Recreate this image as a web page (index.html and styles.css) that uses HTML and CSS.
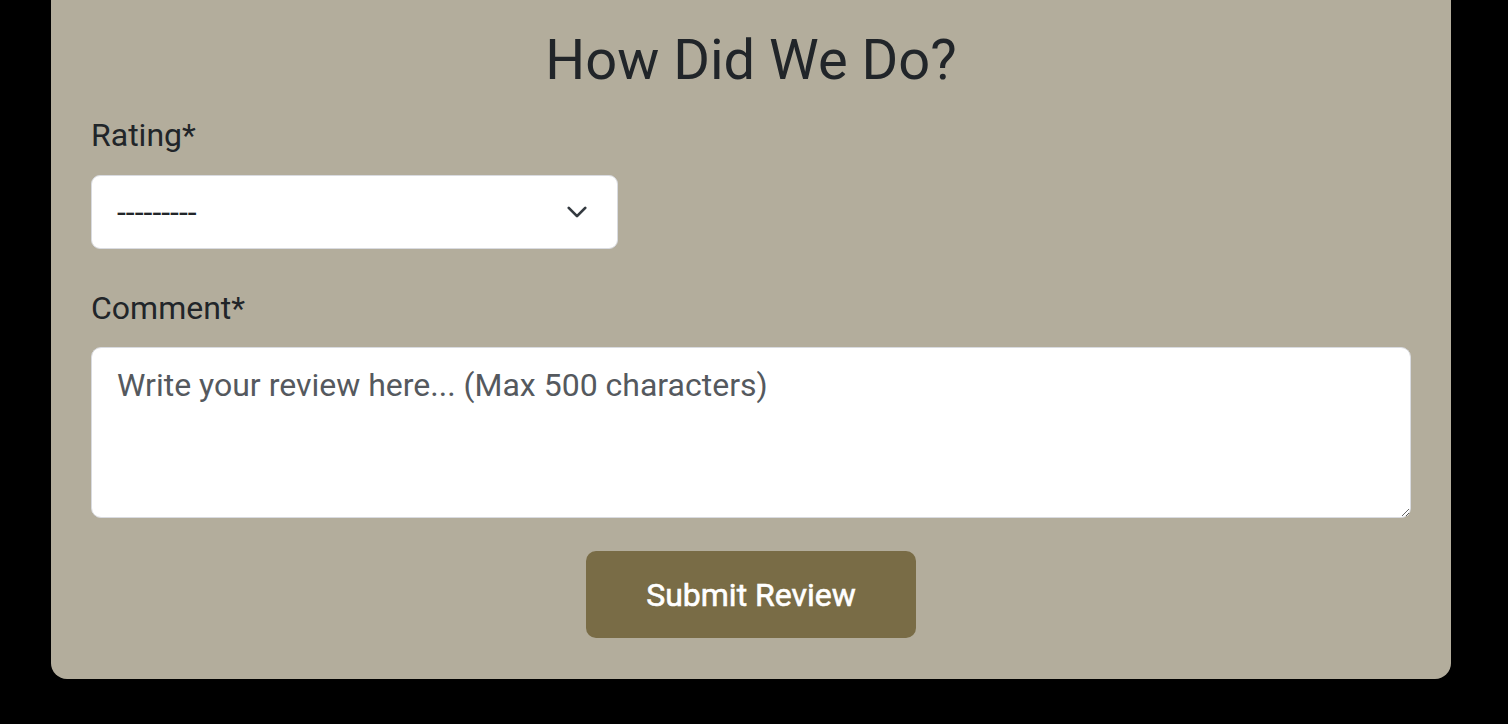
FILE: index.html
```html
<!DOCTYPE html>
<html lang="en">
<head>
<meta charset="utf-8">
<title>How Did We Do?</title>
<link rel="stylesheet" href="styles.css">
</head>
<body>
<main class="card">
  <h2 class="title">How Did We Do?</h2>
  <form class="form">
    <label class="label" for="rating">Rating*</label>
    <div class="select-wrap">
      <select id="rating" class="select">
        <option>---------</option>
        <option>1</option>
        <option>2</option>
        <option>3</option>
        <option>4</option>
        <option>5</option>
      </select>
      <svg class="chevron" viewBox="0 0 16 16" width="22" height="22" aria-hidden="true">
        <path d="M2 5l6 6 6-6" fill="none" stroke="#343a40" stroke-width="2" stroke-linecap="round" stroke-linejoin="round"/>
      </svg>
    </div>
    <label class="label label-comment" for="comment">Comment*</label>
    <textarea id="comment" class="textarea" placeholder="Write your review here... (Max 500 characters)"></textarea>
    <div class="actions">
      <button type="button" class="btn">Submit Review</button>
    </div>
  </form>
</main>
</body>
</html>
```
FILE: styles.css
```css
* { box-sizing: border-box; }
html, body { margin: 0; padding: 0; background: #000; }
body {
  font-family: Roboto, "Liberation Sans", Arial, sans-serif;
  color: #212529;
  height: 724px;
  overflow: hidden;
}
.card {
  margin-left: 51px;
  width: 1400px;
  background: #b3ad9c;
  border-radius: 0 0 16px 16px;
  padding: 27px 40px 41px;
}
.title {
  margin: 0;
  font-size: 56px;
  font-weight: 400;
  line-height: 1.2;
  text-align: center;
}
.form { display: flex; flex-direction: column; }
.label {
  display: block;
  font-size: 32px;
  line-height: 1.5;
  margin-top: 17px;
  margin-bottom: 16px;
}
.label-comment { margin-top: 35px; margin-bottom: 15px; }
.select-wrap { position: relative; width: 527px; }
.select {
  appearance: none;
  -webkit-appearance: none;
  width: 100%;
  height: 74px;
  font-family: inherit;
  font-size: 32px;
  color: #212529;
  background: #fff;
  border: 1px solid #d9dbe0;
  border-radius: 9px;
  padding: 0 60px 0 25px;
  outline: none;
}
.chevron {
  position: absolute;
  right: 30px;
  top: 26px;
  pointer-events: none;
}
.textarea {
  display: block;
  width: 100%;
  height: 171px;
  font-family: inherit;
  font-size: 32px;
  line-height: 1.5;
  color: #212529;
  background: #fff;
  border: 1px solid #d9dbe0;
  border-radius: 10px;
  padding: 13px 25px;
  outline: none;
  resize: vertical;
}
.textarea::placeholder { color: #55595e; opacity: 1; }
.actions { display: flex; justify-content: center; margin-top: 33px; }
.btn {
  width: 330px;
  height: 87px;
  background: #796c46;
  color: #fff;
  border: none;
  border-radius: 10px;
  font-family: inherit;
  font-size: 32px;
  font-weight: 400;
  -webkit-text-stroke: 0.6px #fff;
  cursor: pointer;
}
```
